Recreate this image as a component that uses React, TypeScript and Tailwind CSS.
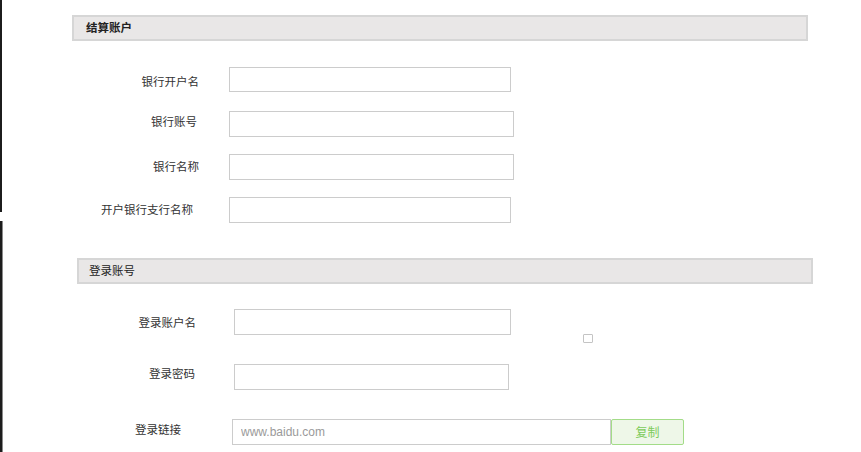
import React from 'react';

const inputCls = 'border border-[#cccccc] bg-white outline-none px-2 text-[12px]';

export default function App() {
  return (
    <div className="w-[861px] h-[452px] bg-white flex overflow-hidden font-['Noto_Sans_CJK_SC',sans-serif] text-[11.5px] text-[#333]">
      <div className="w-[3px] shrink-0 flex flex-col">
        <div className="h-[212px] w-[2px] bg-[#1c1c1c]" />
        <div className="h-[9px]" />
        <div className="flex-1 w-[3px] bg-[#1c1c1c] border-r border-[#8a8a8a]" />
      </div>

      <div className="flex-1 flex flex-col">
        {/* 结算账户 */}
        <div className="mt-[15px] ml-[69px] w-[736px] h-[26px] border-2 border-[#d6d6d6] bg-[#e9e7e7] flex items-center pl-[12px] font-bold text-[#222]">
          结算账户
        </div>

        <div className="mt-[26px] h-[25px] flex items-center">
          <div className="w-[226px] pr-[30px] text-right pt-[4px]">银行开户名</div>
          <input className={`${inputCls} h-full w-[282px]`} />
        </div>
        <div className="mt-[19px] h-[26px] flex items-center">
          <div className="w-[226px] pr-[32px] text-right pb-[5px]">银行账号</div>
          <input className={`${inputCls} h-full w-[285px]`} />
        </div>
        <div className="mt-[17px] h-[26px] flex items-center">
          <div className="w-[226px] pr-[30px] text-right">银行名称</div>
          <input className={`${inputCls} h-full w-[285px]`} />
        </div>
        <div className="mt-[17px] h-[26px] flex items-center">
          <div className="w-[226px] pr-[36px] text-right">开户银行支行名称</div>
          <input className={`${inputCls} h-full w-[282px]`} />
        </div>

        {/* 登录账号 */}
        <div className="mt-[35px] ml-[74px] w-[736px] h-[26px] border-2 border-[#d6d6d6] bg-[#e9e7e7] flex items-center pl-[10px] text-[#222]">
          登录账号
        </div>

        <div className="mt-[25px] flex items-start">
          <div className="w-[231px] h-[26px] pr-[38px] flex items-center justify-end pt-[2px]">登录账户名</div>
          <input className={`${inputCls} w-[277px] h-[26px]`} />
          <div className="mt-[25px] ml-[72px] w-[10px] h-[9px] border border-[#c4c4c4] rounded-[1px]" />
        </div>
        <div className="mt-[21px] h-[26px] flex items-center">
          <div className="w-[231px] pr-[39px] text-right pb-[6px]">登录密码</div>
          <input className={`${inputCls} h-full w-[275px]`} />
        </div>

        <div className="mt-[29px] h-[26px] flex items-center">
          <div className="w-[229px] pr-[51px] text-right pb-[5px]">登录链接</div>
          <input
            className={`${inputCls} h-full w-[379px] font-['Liberation_Sans',sans-serif] placeholder:text-[#9a9a9a]`}
            placeholder="www.baidu.com"
          />
          <button className="w-[73px] h-full border border-[#a3dc88] bg-[#eef7e8] rounded-[2px] text-[#7ccb5a] text-[12px]">
            复制
          </button>
        </div>
      </div>
    </div>
  );
}
